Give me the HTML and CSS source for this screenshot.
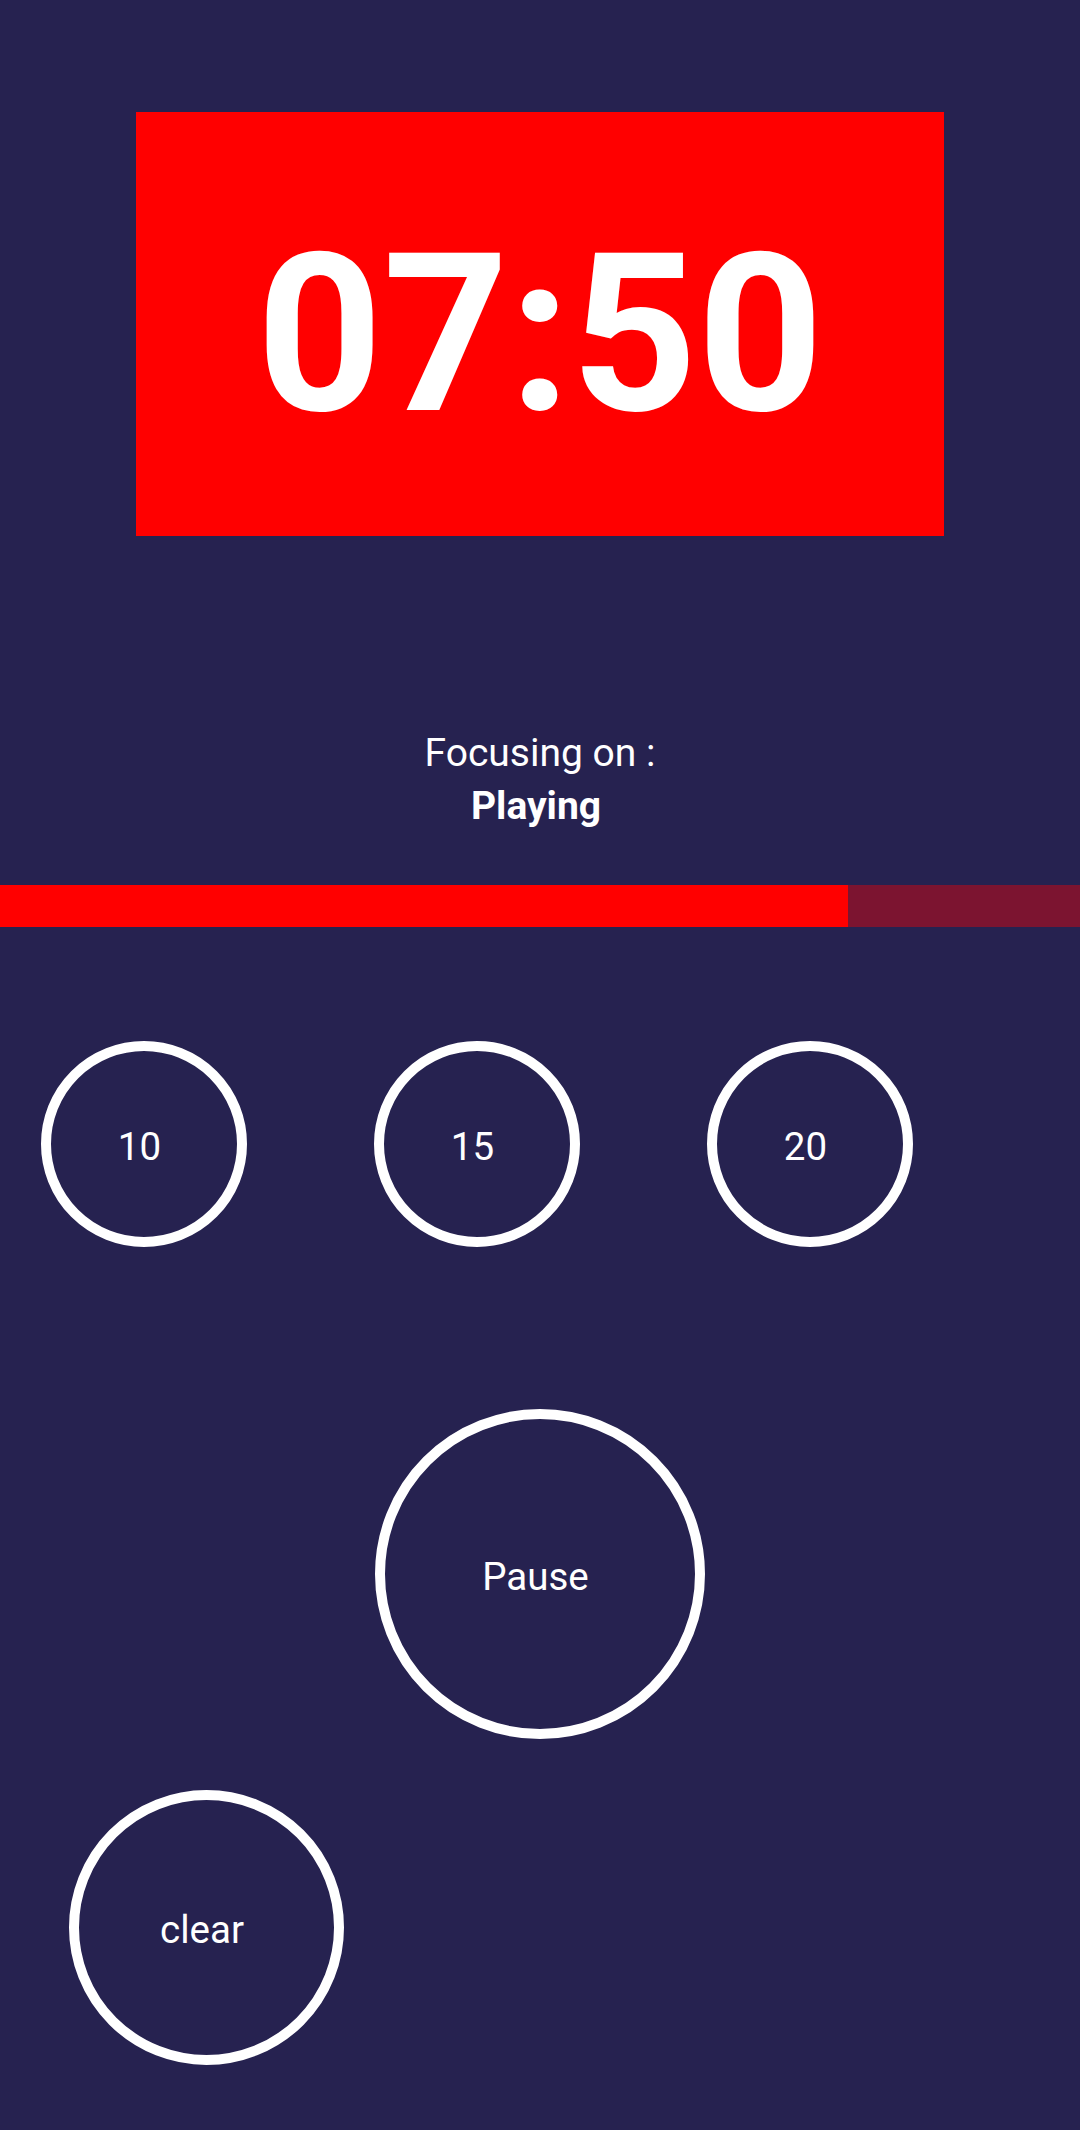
FILE: index.html
```html
<!DOCTYPE html>
<html lang="en">
<head>
    <meta charset="UTF-8">
    <meta name="viewport" content="width=device-width, initial-scale=1.0">
    <title>Focus Timer</title>
    <link rel="stylesheet" href="styles.css">
</head>
<body>
    <div class="timer-box">
        <div class="timer-text">07:50</div>
    </div>

    <div class="focus-label">
        <div class="focus-title">Focusing on :</div>
        <div class="focus-task">Playing</div>
    </div>

    <div class="progress">
        <div class="progress-fill" style="width: 78.5%;"></div>
    </div>

    <div class="preset-row">
        <button class="circle-btn preset-btn">10</button>
        <button class="circle-btn preset-btn">15</button>
        <button class="circle-btn preset-btn">20</button>
    </div>

    <div class="main-row">
        <button class="circle-btn pause-btn">Pause</button>
    </div>

    <div class="clear-row">
        <button class="circle-btn clear-btn">clear</button>
    </div>
</body>
</html>
```

FILE: styles.css
```css
body {
    font-family: Roboto, "Noto Sans", sans-serif;
    margin: 0;
    padding: 0;
    background-color: #262250;
    color: #fff;
    height: 2130px;
    overflow: hidden;
}

.timer-box {
    width: 808px;
    height: 424px;
    margin: 112px auto 0;
    background: #ff0000;
    box-sizing: border-box;
    padding-top: 113px;
    text-align: center;
}

.timer-text {
    font-size: 220px;
    font-weight: 700;
    line-height: 220px;
}

.focus-label {
    margin-top: 191px;
    text-align: center;
    font-size: 39px;
    line-height: 53px;
}

.focus-task {
    font-weight: 700;
    padding-right: 8px;
}

.progress {
    margin-top: 52px;
    height: 42px;
    background: rgba(255, 0, 0, 0.4);
}

.progress-fill {
    height: 100%;
    background: #ff0000;
}

.circle-btn {
    box-sizing: border-box;
    border: 10px solid #fff;
    border-radius: 50%;
    background: transparent;
    color: #fff;
    font-family: Roboto, "Noto Sans", sans-serif;
    font-size: 38.5px;
    padding: 4px 9px 0 0;
    display: flex;
    align-items: center;
    justify-content: center;
}

.preset-row {
    display: flex;
    gap: 127px;
    padding-left: 41px;
    margin-top: 114px;
}

.preset-btn {
    width: 206px;
    height: 206px;
}

.main-row {
    display: flex;
    justify-content: center;
    margin-top: 162px;
}

.pause-btn {
    width: 330px;
    height: 330px;
}

.clear-row {
    display: flex;
    padding-left: 69px;
    margin-top: 51px;
}

.clear-btn {
    width: 275px;
    height: 275px;
}
```
